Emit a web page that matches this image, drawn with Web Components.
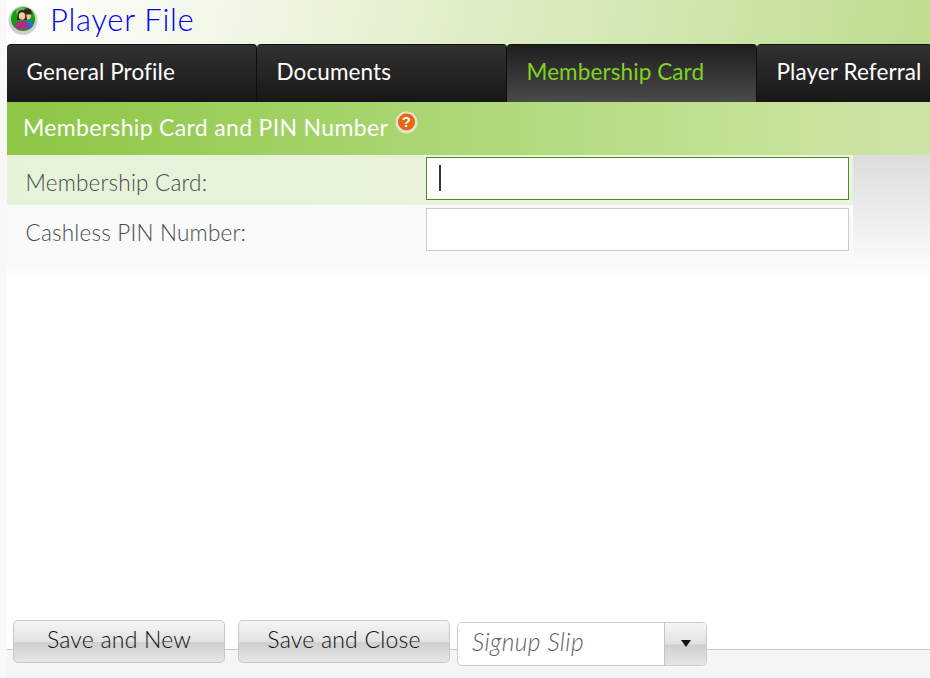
<!DOCTYPE html>
<html>
<head>
<meta charset="utf-8">
<title>Player File</title>
<style>
  html, body { margin: 0; height: 100%; overflow: hidden; }
  body { background: #f8f8f8; font-family: "Lato", "Open Sans", sans-serif; font-weight: 300; }
</style>
</head>
<body>
<player-page>
  <title-bar slot="title">Player File</title-bar>
  <tab-bar slot="tabs">
    <tab-item style="--w:250px">General Profile</tab-item>
    <tab-item style="--w:250px">Documents</tab-item>
    <tab-item style="--w:250px" active>Membership Card</tab-item>
    <tab-item style="--w:175px">Player Referral</tab-item>
  </tab-bar>
  <section-bar slot="section">Membership Card and PIN Number</section-bar>
  <form-row slot="form" focused label="Membership Card:"></form-row>
  <form-row slot="form" label="Cashless PIN Number:"></form-row>
  <action-bar slot="footer">
    <action-button style="--w:212px">Save and New</action-button>
    <action-button style="--w:212px">Save and Close</action-button>
    <report-select>Signup Slip</report-select>
  </action-bar>
</player-page>

<script>
class PlayerPage extends HTMLElement {
  constructor() {
    super();
    this.attachShadow({ mode: 'open' });
    this.shadowRoot.innerHTML = `
      <style>
        :host { display: flex; flex-direction: column; width: 930px; height: 678px; padding-left: 7px; box-sizing: border-box; }
        .body { flex: 1; display: flex; flex-direction: column; background: linear-gradient(#dcdcdc 0, #f4f4f4 85px, #fff 130px); }
        .form { width: 846px; }
      </style>
      <slot name="title"></slot>
      <slot name="tabs"></slot>
      <slot name="section"></slot>
      <div class="body">
        <div class="form"><slot name="form"></slot></div>
      </div>
      <slot name="footer"></slot>
    `;
  }
}

class TitleBar extends HTMLElement {
  constructor() {
    super();
    this.attachShadow({ mode: 'open' });
    this.shadowRoot.innerHTML = `
      <style>
        :host { display: flex; align-items: center; height: 44px; box-sizing: border-box; padding: 0 0 6px 1px;
          background: linear-gradient(100deg, #fff 0, #f3f8ea 22%, #dcecc0 55%, #bddd90 100%); }
        svg { width: 30px; height: 30px; flex: none; margin-top: 1px; }
        .t { margin-left: 12px; font-size: 31px; color: #0000f0; letter-spacing: .7px; }
      </style>
      <svg viewBox="0 0 30 30">
        <circle cx="15" cy="15.5" r="14.5" fill="#cfcfcf"/>
        <circle cx="15" cy="14" r="12" fill="#12a012"/>
        <circle cx="13" cy="7" r="5" fill="#8fdc8f" opacity=".5"/>
        <ellipse cx="19.5" cy="10.500" rx="3.600" ry="4" fill="#f0c8a0"/>
        <path d="M15.500 7.500a4 4 0 0 1 8 0v2h-8z" fill="#3a2418"/>
        <path d="M14 23a6 6 0 0 1 5-8 6 5 0 0 1 6 6l-3 3z" fill="#1c78c0"/>
        <path d="M9.500 11c0-4 2-6 4.500-6s4.500 2 4.500 6l.5 4h-10z" fill="#3a2418"/>
        <ellipse cx="14" cy="11" rx="3.200" ry="3.800" fill="#f2cdaa"/>
        <path d="M6.500 22c1-4 4-6 7.500-6s6.500 2 7.500 6a11.500 11.500 0 0 1-15 0z" fill="#b02a8a"/>
      </svg>
      <span class="t"><slot></slot></span>
    `;
  }
}

class TabBar extends HTMLElement {
  constructor() {
    super();
    this.attachShadow({ mode: 'open' });
    this.shadowRoot.innerHTML = `
      <style>
        :host { display: flex; height: 58px; overflow: hidden; background: linear-gradient(90deg, #fff, #dcecc0 55%, #c0de92); }
      </style>
      <slot></slot>
    `;
  }
}

class TabItem extends HTMLElement {
  constructor() {
    super();
    this.attachShadow({ mode: 'open' });
    this.shadowRoot.innerHTML = `
      <style>
        :host { display: flex; align-items: center; flex: none; box-sizing: border-box; width: var(--w); height: 58px;
          padding: 0 0 4px 19.500px; border-radius: 4px 4px 0 0; border-top: 1px solid #111; border-right: 1px solid #0e0e0e;
          background: linear-gradient(#323232, #171717); color: #fff; font-size: 22.500px; letter-spacing: .1px; white-space: nowrap; font-weight: 400; }
        :host([active]) { background: linear-gradient(#1e1e1e, #4a4a4a); color: #7fd321; }
      </style>
      <slot></slot>
    `;
  }
}

class SectionBar extends HTMLElement {
  constructor() {
    super();
    this.attachShadow({ mode: 'open' });
    this.shadowRoot.innerHTML = `
      <style>
        :host { display: flex; align-items: center; height: 53px; box-sizing: border-box; padding: 0 0 3px 16px;
          background: linear-gradient(90deg, #8cc643 0, #aad672 45%, #c3e295 80%, #cfe3a8 100%); color: #fff;
          font-size: 23px; letter-spacing: .33px; font-weight: 400; white-space: nowrap; }
        svg { width: 23px; height: 23px; margin: -9px 0 0 7px; }
        text { font: bold 15px "Liberation Sans", sans-serif; fill: #fff; }
      </style>
      <slot></slot>
      <svg viewBox="0 0 23 23">
        <circle cx="11.500" cy="11.500" r="11" fill="#e8e2d2"/>
        <circle cx="11.500" cy="11" r="8.500" fill="#e8660c"/>
        <text x="11.500" y="16" text-anchor="middle">?</text>
      </svg>
    `;
  }
}

class FormRow extends HTMLElement {
  constructor() {
    super();
    this.attachShadow({ mode: 'open' });
    const focused = this.hasAttribute('focused');
    this.shadowRoot.innerHTML = `
      <style>
        :host { display: grid; grid-template-columns: 419px 423px; height: 50px; background: #fafafa; color: #454b50; font-size: 22.500px; letter-spacing: .2px; }
        :host([focused]) { background: linear-gradient(90deg, #e6f3d8, #eaf4da); }
        :host(:not([focused])) { height: 52px; }
        .label { padding: 15px 0 0 18.500px; white-space: nowrap; line-height: 26px; }
        .field { height: 43px; margin-top: 2px; box-sizing: border-box; border: 1px solid #ccc; background: #fff; }
        :host(:not([focused])) .field { margin-top: 3px; }
        :host([focused]) .field { border-color: #4e8a2c; }
        .caret { display: block; width: 2px; height: 26px; margin: 7px 0 0 12px; background: #333; }
      </style>
      <div class="label"></div>
      <div class="field">${focused ? '<span class="caret"></span>' : ''}</div>
    `;
    this.shadowRoot.querySelector('.label').textContent = this.getAttribute('label');
  }
}

class ActionBar extends HTMLElement {
  constructor() {
    super();
    this.attachShadow({ mode: 'open' });
    this.shadowRoot.innerHTML = `
      <style>
        :host { display: flex; align-items: flex-start; gap: 13px; height: 58px; box-sizing: border-box; padding-left: 6px;
          background: linear-gradient(#fff 29px, #ccc 29px, #ccc 30px, #f5f5f5 30px); }
      </style>
      <slot></slot>
    `;
  }
}

class ActionButton extends HTMLElement {
  constructor() {
    super();
    this.attachShadow({ mode: 'open' });
    this.shadowRoot.innerHTML = `
      <style>
        :host { display: flex; align-items: center; justify-content: center; box-sizing: border-box; width: var(--w); height: 43px;
          padding-bottom: 6px; border: 1px solid #c8c8c8; border-radius: 5px; color: #111; font-size: 23px; letter-spacing: .2px; white-space: nowrap;
          background: linear-gradient(#f6f6f6 0, #e2e2e2 50%, #cfcfcf 52%, #e6e6e6 100%); }
      </style>
      <slot></slot>
    `;
  }
}

class ReportSelect extends HTMLElement {
  constructor() {
    super();
    this.attachShadow({ mode: 'open' });
    this.shadowRoot.innerHTML = `
      <style>
        :host { display: flex; box-sizing: border-box; width: 250px; height: 44px; margin: 2px 0 0 -6px; border: 1px solid #ccc; border-radius: 5px; background: #fff; overflow: hidden; }
        .value { flex: 1; padding: 0 0 5px 14px; display: flex; align-items: center; color: #5e5e5e; font-size: 24.500px; letter-spacing: .4px; font-style: italic; }
        .arrow { width: 41px; display: flex; align-items: center; justify-content: center; border-left: 1px solid #c4c4c4;
          background: linear-gradient(#f6f6f6 0, #e2e2e2 50%, #cfcfcf 52%, #e6e6e6 100%); }
        svg { width: 10px; height: 7px; margin-bottom: 2px; }
      </style>
      <div class="value"><slot></slot></div>
      <div class="arrow"><svg viewBox="0 0 10 7"><path d="M0 0h10L5 7z" fill="#111"/></svg></div>
    `;
  }
}

customElements.define('player-page', PlayerPage);
customElements.define('title-bar', TitleBar);
customElements.define('tab-bar', TabBar);
customElements.define('tab-item', TabItem);
customElements.define('section-bar', SectionBar);
customElements.define('form-row', FormRow);
customElements.define('action-bar', ActionBar);
customElements.define('action-button', ActionButton);
customElements.define('report-select', ReportSelect);
</script>
</body>
</html>
